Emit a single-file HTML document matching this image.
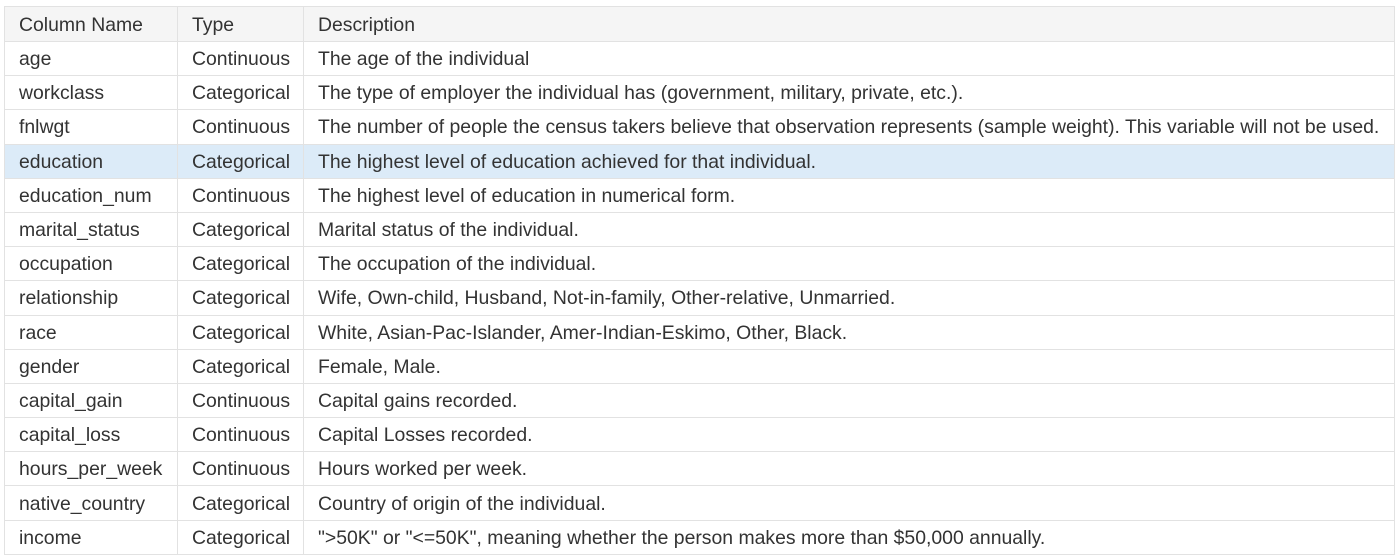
<!DOCTYPE html>
<html><head><style>
body{margin:0;background:#fff;width:1400px;height:560px;overflow:hidden}
table{position:absolute;left:4px;top:6px;width:1391px;border-collapse:collapse;font-family:"Liberation Sans",sans-serif;font-size:19.4px;color:#333}
td,th{border:1px solid #e2e2e2;height:34.2px;padding:2px 0 0 14px;text-align:left;font-weight:normal;white-space:nowrap;box-sizing:border-box}
th{background:#f5f5f5;height:35px}
tr.h td{background:#dcebf8}
</style></head><body>
<table>
<colgroup><col style="width:173px"><col style="width:126px"><col></colgroup>
<tr><th>Column Name</th><th>Type</th><th>Description</th></tr>
<tr><td>age</td><td>Continuous</td><td>The age of the individual</td></tr>
<tr><td>workclass</td><td>Categorical</td><td>The type of employer the individual has (government, military, private, etc.).</td></tr>
<tr><td>fnlwgt</td><td>Continuous</td><td>The number of people the census takers believe that observation represents (sample weight). This variable will not be used.</td></tr>
<tr class="h"><td>education</td><td>Categorical</td><td>The highest level of education achieved for that individual.</td></tr>
<tr><td>education_num</td><td>Continuous</td><td>The highest level of education in numerical form.</td></tr>
<tr><td>marital_status</td><td>Categorical</td><td>Marital status of the individual.</td></tr>
<tr><td>occupation</td><td>Categorical</td><td>The occupation of the individual.</td></tr>
<tr><td>relationship</td><td>Categorical</td><td>Wife, Own-child, Husband, Not-in-family, Other-relative, Unmarried.</td></tr>
<tr><td>race</td><td>Categorical</td><td>White, Asian-Pac-Islander, Amer-Indian-Eskimo, Other, Black.</td></tr>
<tr><td>gender</td><td>Categorical</td><td>Female, Male.</td></tr>
<tr><td>capital_gain</td><td>Continuous</td><td>Capital gains recorded.</td></tr>
<tr><td>capital_loss</td><td>Continuous</td><td>Capital Losses recorded.</td></tr>
<tr><td>hours_per_week</td><td>Continuous</td><td>Hours worked per week.</td></tr>
<tr><td>native_country</td><td>Categorical</td><td>Country of origin of the individual.</td></tr>
<tr><td>income</td><td>Categorical</td><td>"&gt;50K" or "&lt;=50K", meaning whether the person makes more than $50,000 annually.</td></tr>
</table>
</body></html>
